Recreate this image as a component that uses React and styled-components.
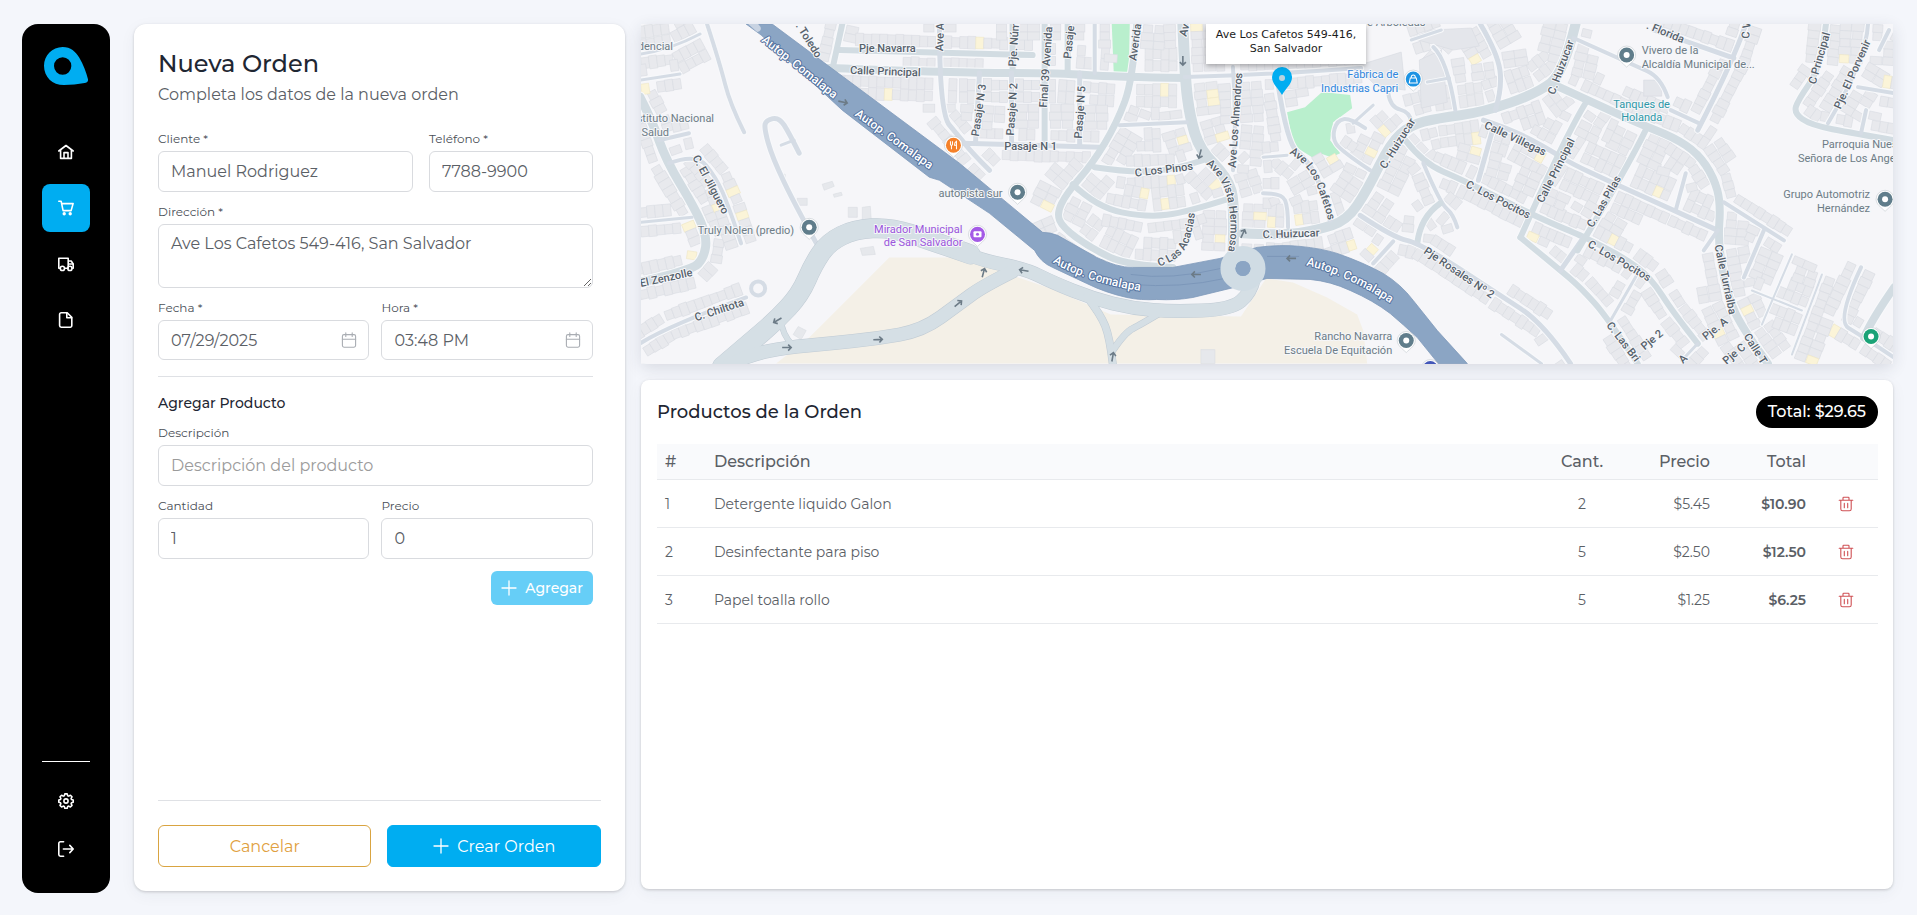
import React from "react";
import styled, { createGlobalStyle, css } from "styled-components";

const GlobalStyle = createGlobalStyle`
  *, *::before, *::after { box-sizing: border-box; }
  body {
    margin: 0;
    background: #f4f6fb;
    color: #5b6066;
    font-family: Montserrat, Inter, "Open Sans", sans-serif;
    font-size: 16px;
  }
  button, input, textarea { font: inherit; }
  h1, h2, h3, p { margin: 0; }
`;

/* ---------- shell ---------- */

const Shell = styled.div`
  display: flex;
  gap: 24px;
  min-height: 100vh;
  padding: 24px 24px 22px 22px;
`;

const Sidebar = styled.nav`
  flex: 0 0 88px;
  display: flex;
  flex-direction: column;
  align-items: center;
  padding: 23px 0 20px;
  border-radius: 16px;
  background: #000;
`;

const LogoLink = styled.a`
  display: block;
  height: 38px;
  margin-bottom: 43px;
`;

const NavGroup = styled.div`
  display: flex;
  flex-direction: column;
  gap: ${(p) => p.$gap}px;
`;

const NavLink = styled.a`
  display: flex;
  align-items: center;
  justify-content: center;
  width: 48px;
  height: 48px;
  border-radius: 8px;
  color: #fff;
  background: ${(p) => (p.$active ? "#00adf1" : "transparent")};
`;

const NavDivider = styled.hr`
  width: 48px;
  margin: auto 0 15px;
  border: 0;
  border-top: 1px solid #fff;
`;

const Main = styled.main`
  flex: 1;
  min-width: 0;
  display: grid;
  grid-template-columns: minmax(0, 20fr) minmax(0, 51fr);
  gap: 16px;
  padding-bottom: 2px;
`;

const cardShadow = css`
  box-shadow: 0 1px 3px rgba(0, 0, 0, 0.18), 0 4px 16px rgba(40, 50, 80, 0.05);
`;

/* ---------- order form ---------- */

const OrderForm = styled.form`
  display: flex;
  flex-direction: column;
  padding: 24px;
  border-radius: 12px;
  background: #fff;
  ${cardShadow}
`;

const Title = styled.h1`
  font-size: 24px;
  font-weight: 500;
  line-height: 32px;
  color: #1f2733;
`;

const Subtitle = styled.p`
  margin: 3px 0 24px;
  line-height: 24px;
`;

const FormBody = styled.div`
  flex: 1;
  display: flex;
  flex-direction: column;
  gap: 12px;
  padding-right: 8px;
`;

const FieldRow = styled.div`
  display: grid;
  grid-template-columns: ${(p) => p.$columns || "1fr 1fr"};
  gap: ${(p) => p.$gap || 12}px;
`;

const FieldBox = styled.div`
  display: flex;
  flex-direction: column;
  gap: 4px;
  min-width: 0;
`;

const Label = styled.label`
  font-size: 12px;
  line-height: 16px;
  color: #4a4f57;
`;

const inputLook = css`
  display: block;
  width: 100%;
  border: 1px solid #d9dbdf;
  border-radius: 6px;
  padding: 0 12px;
  background: #fff;
  color: #5b6066;
  outline: none;
  &::placeholder { color: #9b9b9b; opacity: 1; }
`;

const Input = styled.input`
  ${inputLook}
  height: 41px;
`;

const TextArea = styled.textarea`
  ${inputLook}
  height: 64px;
  padding: 7px 12px;
  line-height: 24px;
  resize: vertical;
`;

const IconInput = styled.div`
  position: relative;
  color: #a9adb3;
  & > input { height: 40px; }
  & > svg {
    position: absolute;
    right: 12px;
    top: 12px;
    pointer-events: none;
  }
`;

const Rule = styled.hr`
  width: 100%;
  margin: 4px 0;
  border: 0;
  border-top: 1px solid #dfe1e5;
`;

const SectionTitle = styled.h2`
  font-size: 14px;
  font-weight: 500;
  line-height: 20px;
  color: #1f2733;
`;

const buttonLook = css`
  display: inline-flex;
  align-items: center;
  justify-content: center;
  gap: 8px;
  border-radius: 6px;
  cursor: pointer;
`;

const AddButton = styled.button`
  ${buttonLook}
  align-self: flex-end;
  height: 34px;
  padding: 0 10px;
  border: 0;
  background: #66cef7;
  color: #fff;
  font-size: 14px;
  font-weight: 500;
`;

const FormFooter = styled.footer`
  display: grid;
  grid-template-columns: 1fr 1fr;
  gap: 16px;
  padding-top: 24px;
  border-top: 1px solid #dfe1e5;
`;

const FooterButton = styled.button`
  ${buttonLook}
  height: 42px;
  border: 1px solid ${(p) => (p.$primary ? "#00adf1" : "#d9a441")};
  background: ${(p) => (p.$primary ? "#00adf1" : "#fff")};
  color: ${(p) => (p.$primary ? "#fff" : "#dfa040")};
`;

/* ---------- right column ---------- */

const RightColumn = styled.div`
  display: grid;
  grid-template-rows: 2fr 3fr;
  gap: 16px;
  min-width: 0;
  padding-bottom: 2px;
`;

const MapFrame = styled.div`
  min-height: 0;
  display: grid;
  box-shadow: 0 4px 16px rgba(40, 50, 70, 0.14);
  border-radius: 0 0 6px 6px;
`;

const MapPanel = styled.section`
  position: relative;
  overflow: hidden;
  min-height: 0;
`;

const MapDrawing = styled.svg`
  position: absolute;
  inset: 0;
  width: 100%;
  height: 100%;
  font-family: Roboto, sans-serif;
`;

const MapTooltip = styled.div`
  position: absolute;
  top: 0;
  left: 645px;
  width: 160px;
  height: 40px;
  margin-left: -80px;
  padding-top: 4px;
  background: #fff;
  box-shadow: 0 2px 5px rgba(0, 0, 0, 0.3);
  color: #1c1c1c;
  font-family: "DejaVu Sans", sans-serif;
  font-size: 11px;
  line-height: 14px;
  text-align: center;
`;

const ProductsCard = styled.section`
  padding: 16px 15px 16px 16px;
  border-radius: 8px;
  background: #fff;
  ${cardShadow}
`;

const ProductsHeader = styled.header`
  display: flex;
  align-items: center;
  justify-content: space-between;
  height: 32px;
  margin-bottom: 16px;
`;

const ProductsTitle = styled.h2`
  font-size: 18px;
  font-weight: 500;
  color: #1f2733;
`;

const TotalBadge = styled.span`
  display: flex;
  align-items: center;
  height: 32px;
  padding: 0 12px;
  border-radius: 16px;
  background: #000;
  color: #fff;
  font-weight: 500;
`;

const Table = styled.table`
  width: 100%;
  table-layout: fixed;
  border-collapse: collapse;
`;

const Th = styled.th`
  width: ${(p) => p.$width || "auto"};
  height: 36px;
  padding: 0 8px;
  border-bottom: 1px solid #e8eaed;
  background: #f9fafc;
  font-weight: 500;
  text-align: ${(p) => p.$align || "left"};
`;

const Td = styled.td`
  height: 48px;
  padding: 0 8px;
  border-bottom: 1px solid #e8eaed;
  font-size: 14px;
  font-weight: ${(p) => (p.$strong ? 600 : 400)};
  text-align: ${(p) => p.$align || "left"};
`;

const DeleteButton = styled.button`
  display: inline-flex;
  padding: 4px;
  border: 0;
  background: none;
  color: #cf5054;
  cursor: pointer;
`;

/* ---------- icons ---------- */

const Icon = ({ children, size = 16, width = 1.6 }) => (
  <svg width={size} height={size} viewBox="0 0 16 16" fill="none" stroke="currentColor"
    strokeWidth={width} strokeLinecap="round" strokeLinejoin="round" aria-hidden="true">
    {children}
  </svg>
);

const HomeIcon = () => (
  <Icon>
    <path d="M.8 7 8 1.5 15.2 7M2.6 6v8.4h10.8V6" />
    <path d="M6 14.2V8.6h4v5.6" />
  </Icon>
);
const CartIcon = () => (
  <Icon>
    <path d="M.8 1.2h2.3l2 9.4h8l2-7H3.7" />
    <circle cx="6.2" cy="13.8" r=".9" fill="currentColor" />
    <circle cx="12.2" cy="13.8" r=".9" fill="currentColor" />
  </Icon>
);
const TruckIcon = () => (
  <Icon>
    <path d="M2 12.2H.8V2.2h9.4v10M10.2 5h3l2 3v4.2h-.8M6.8 12.2h2.6" />
    <path d="M10.8 8h4" />
    <circle cx="4.4" cy="12.4" r="2.1" />
    <circle cx="11.9" cy="12.4" r="2.1" />
  </Icon>
);
const FileIcon = () => (
  <Icon>
    <path d="M3.2.8h6l4.6 4.6v8.2a1.6 1.6 0 0 1-1.6 1.6h-9a1.6 1.6 0 0 1-1.6-1.6V2.4A1.6 1.6 0 0 1 3.2.8Z" />
    <path d="M8.8 1v4.8h4.8" />
  </Icon>
);
const CogIcon = () => (
  <Icon>
    <path d="M6.8.9h2.4l.5 1.8 1 .4 1.7-.9 1.6 1.6-.9 1.7.4 1 1.7.5v2.2l-1.7.5-.4 1 .9 1.7-1.6 1.6-1.7-.9-1 .4-.5 1.7H6.8l-.5-1.7-1-.4-1.7.9L2 12.4l.9-1.7-.4-1L.8 9.2V7l1.7-.5.4-1L2 3.8l1.6-1.6 1.7.9 1-.4Z" />
    <circle cx="8" cy="8" r="2.1" />
  </Icon>
);
const LogoutIcon = () => (
  <Icon>
    <path d="M5.6.8H2.4A1.6 1.6 0 0 0 .8 2.4v11.2a1.6 1.6 0 0 0 1.6 1.6h3.2M5.4 8h9.8M11.8 4.4 15.2 8l-3.4 3.6" />
  </Icon>
);
const PlusIcon = () => (
  <Icon width={1.3}>
    <path d="M8 1v14M1 8h14" />
  </Icon>
);
const CalendarIcon = () => (
  <Icon width={1.1}>
    <rect x="1.4" y="2.6" width="13.2" height="12.6" rx="1.6" />
    <path d="M1.4 7.3h13.2M4.8.8v3.6M11.2.8v3.6" />
  </Icon>
);
const TrashIcon = () => (
  <Icon width={1.1}>
    <path d="M1.2 4.2h13.6M2.8 4.2V13a1.8 1.8 0 0 0 1.8 1.8h6.8a1.8 1.8 0 0 0 1.8-1.8V4.2M5 4.2V1.9q0-.7.7-.7h4.6q.7 0 .7.7v2.3M6.3 7.4v4.4M9.7 7.4v4.4" />
  </Icon>
);
const Logo = () => (
  <svg width="44" height="38" viewBox="0 0 132 114" aria-hidden="true">
    <path fill="#00adf1" fillRule="evenodd"
      d="M56 0C80 0 95 14 106 32C118 53 127 75 132 97C133 104 128 107 122 108C102 112 80 114 60 114C25 114 0 90 0 56C0 25 25 0 56 0ZM56 31A26 26 0 1 0 56 83A26 26 0 1 0 56 31Z" />
  </svg>
);

/* ---------- map data ---------- */

// width, points, rows of houses on each side
const STREETS = [
  [4, [[67, 0], [80, 40], [90, 80], [104, 108]], 0],
  [9, [[0, 73], [12, 96], [26, 136], [56, 186], [67, 213], [64, 233], [52, 246], [0, 258]], 1],
  [4, [[19, 116], [49, 109]], 1],
  [4, [[29, 139], [56, 129], [76, 153], [89, 183], [101, 219]], 1],
  [3, [[0, 198], [52, 193]], 1],
  [3, [[0, 30], [30, 26], [60, 10]], 2],
  [3, [[0, 56], [40, 50]], 1],
  [4, [[0, 319], [29, 301], [106, 273]], 1],
  [5, [[179, 224], [156, 183], [132, 133], [124, 104], [126, 96], [139, 93], [149, 109], [159, 129]], 0],
  [3, [[141, 121], [154, 116]], 0],
  [6, [[202, 0], [193, 41]], 1],
  [6, [[199, 26], [376, 31], [392, 31]], 1],
  [8, [[189, 44], [319, 49], [419, 49], [472, 53], [546, 54]], 2],
  [5, [[299, 0], [299, 89], [319, 113], [332, 129], [349, 146]], 1],
  [5, [[322, 119], [459, 123]], 1],
  [6, [[372, 0], [372, 49]], 1],
  [6, [[404, 0], [404, 119]], 2],
  [6, [[427, 0], [427, 49]], 1],
  [4, [[454, 0], [454, 49]], 1],
  [5, [[439, 49], [439, 121]], 2],
  [5, [[339, 49], [335, 119]], 2],
  [5, [[371, 49], [371, 121]], 2],
  [7, [[496, 0], [492, 56], [476, 99], [452, 139], [426, 169], [416, 189], [422, 203], [449, 223], [486, 241], [532, 243]], 2],
  [11, [[542, 0], [544, 53], [549, 93], [559, 126], [586, 153], [594, 179], [592, 230]], 2],
  [4, [[479, 101], [546, 98]], 2],
  [6, [[454, 143], [486, 148], [532, 146], [562, 136]], 1],
  [6, [[432, 160], [456, 183], [506, 193], [546, 188], [592, 173]], 2],
  [4, [[592, 43], [596, 100], [592, 146]], 2],
  [4, [[544, 53], [640, 50], [720, 44]], 1],
  [10, [[602, 209], [640, 211], [676, 206], [706, 196], [726, 166], [749, 119], [769, 101], [796, 94], [842, 88], [896, 69], [922, 49], [934, 0]], 2],
  [5, [[637, 60], [646, 119], [666, 136], [680, 160], [689, 196]], 2],
  [3, [[622, 133], [646, 131]], 1],
  [4, [[622, 169], [641, 169], [647, 183], [647, 203]], 1],
  [4, [[729, 146], [699, 126], [691, 113], [696, 96], [709, 94], [724, 104]], 1],
  [3, [[712, 99], [732, 81]], 0],
  [4, [[747, 69], [749, 83], [769, 88], [770, 98]], 0],
  [5, [[839, 0], [856, 29], [861, 63], [854, 86]], 2],
  [4, [[792, 23], [806, 36], [814, 86]], 1],
  [3, [[786, 58], [808, 54]], 0],
  [3, [[770, 16], [800, 6]], 1],
  [5, [[842, 96], [872, 106], [909, 126], [929, 139], [972, 159], [1032, 186], [1076, 206]], 2],
  [6, [[764, 116], [782, 139], [822, 156], [896, 193], [939, 211], [949, 216], [982, 233], [1009, 253], [1032, 289], [1056, 319]], 1],
  [5, [[852, 103], [837, 156]], 2],
  [4, [[782, 139], [799, 179], [812, 190], [816, 203]], 1],
  [6, [[799, 179], [779, 193], [776, 219]], 1],
  [5, [[719, 191], [752, 213], [779, 219], [856, 269], [902, 299], [929, 339]], 1],
  [4, [[752, 217], [732, 239]], 1],
  [6, [[946, 76], [939, 86], [909, 146], [879, 213]], 2],
  [6, [[879, 213], [919, 246], [939, 263], [966, 293], [996, 339]], 1],
  [5, [[942, 213], [919, 246]], 1],
  [3, [[996, 249], [969, 296]], 1],
  [6, [[1004, 106], [986, 143], [936, 226]], 2],
  [8, [[909, 59], [929, 68], [996, 99], [1032, 113], [1056, 129], [1072, 153], [1079, 179], [1076, 219], [1086, 273], [1102, 306], [1126, 339]], 2],
  [4, [[1082, 178], [1142, 216]], 1],
  [4, [[1122, 206], [1102, 253]], 2],
  [4, [[1044, 149], [1034, 186]], 2],
  [4, [[1076, 206], [1062, 226]], 1],
  [4, [[932, 14], [992, 41], [1019, 53], [1026, 73]], 0],
  [5, [[1012, 6], [1092, 34]], 1],
  [5, [[1104, 0], [1092, 36], [1056, 106]], 1],
  [4, [[1029, 86], [1057, 99]], 1],
  [6, [[1184, 0], [1179, 43], [1156, 76], [1152, 89], [1169, 101], [1212, 109], [1252, 116]], 1],
  [4, [[1226, 0], [1224, 36], [1186, 99]], 2],
  [4, [[1216, 63], [1252, 69]], 1],
  [4, [[1224, 86], [1219, 109]], 1],
  [4, [[1247, 6], [1237, 26]], 1],
  [4, [[1219, 243], [1194, 296], [1219, 311], [1252, 333]], 1],
  [8, [[1252, 263], [1229, 296], [1222, 313]], 0],
  [2, [[1110, 266], [1160, 286]], 2],
  [2, [[1180, 250], [1150, 330]], 2],
  [2, [[1150, 230], [1120, 300]], 2],
  [3, [[1040, 336], [1056, 319]], 1],
  [3, [[860, 310], [900, 339]], 0],
];

// areas left without houses
const OPEN_LAND = [
  [[70, 0], [108, 0], [200, 86], [290, 156], [400, 228], [300, 200], [200, 200], [160, 250], [130, 215], [112, 120]],
  [[230, 200], [400, 226], [450, 262], [600, 276], [660, 246], [740, 280], [810, 339], [90, 339], [160, 270]],
  [[1120, 12], [1165, 14], [1144, 86], [1170, 112], [1252, 124], [1252, 230], [1200, 230], [1100, 168], [1084, 120]],
  [[816, 190], [860, 190], [940, 262], [970, 300], [955, 339], [935, 330], [900, 280], [840, 250], [800, 218]],
  [[860, 300], [910, 320], [920, 339], [840, 339], [800, 300], [790, 260]],
  [[646, 88], [681, 62], [715, 68], [699, 132], [652, 125]],
  [[470, 0], [492, 0], [490, 50], [472, 50]],
  [[950, 6], [1010, 14], [1080, 40], [1030, 80], [960, 60]],
  [[1000, 190], [1060, 215], [1060, 260], [1030, 270]],
];

const PARKS = [
  "M471 0H489L488 49H473Z",
  "M646 88L664 83L681 68L709 71L711 84L692 98L689 116L699 129L690 133L679 129L671 133L652 121Z",
];

const SAND = [
  "M249 233H319L410 264L470 290L600 292L625 254L652 258L686 273L716 290L722 306L726 339H136L169 313Z",
];

const HIGHWAY =
  "M106 0H132L319 139L402 208Q410 208 417 211L456 233Q476 243 492 243H532L579 234L616 223Q640 220 659 222Q680 224 696 229Q722 238 742 249Q760 260 772 276L796 306L826 339H797L776 313Q762 300 749 289Q732 276 709 266Q690 257 669 255L626 254L589 264L552 273Q535 276 516 275Q500 276 486 273Q464 268 446 259L412 243Q400 238 394 226L349 189L299 156L289 153L202 86L121 11Z";

const RAMPS = [
  [19, [[82, 342], [110, 318], [136, 296], [160, 270], [173, 240], [188, 218], [214, 205], [250, 203], [290, 216], [330, 230]]],
  [13, [[290, 218], [319, 226], [342, 236], [386, 245], [412, 258], [452, 274], [492, 284], [532, 287], [590, 285], [610, 268], [613, 254]]],
  [13, [[89, 340], [110, 330], [146, 323], [190, 319], [236, 314], [282, 306], [319, 279], [342, 262], [372, 247]]],
  [7, [[446, 272], [460, 290], [469, 313], [472, 339]]],
  [6, [[520, 288], [500, 300], [484, 308], [472, 326]]],
  [5, [[141, 296], [142, 310], [152, 320]]],
];

const smooth = (pts) => {
  if (pts.length < 3) return `M${pts.map((p) => p.join(" ")).join("L")}`;
  let d = `M${pts[0].join(" ")}`;
  for (let i = 1; i < pts.length - 1; i++) {
    const [x, y] = pts[i];
    const last = i === pts.length - 2;
    const ex = last ? pts[i + 1][0] : (x + pts[i + 1][0]) / 2;
    const ey = last ? pts[i + 1][1] : (y + pts[i + 1][1]) / 2;
    d += `Q${x} ${y} ${ex} ${ey}`;
  }
  return d;
};

const inside = (x, y, poly) => {
  let hit = false;
  for (let i = 0, j = poly.length - 1; i < poly.length; j = i++) {
    const [xi, yi] = poly[i];
    const [xj, yj] = poly[j];
    if (yi > y !== yj > y && x < ((xj - xi) * (y - yi)) / (yj - yi) + xi) hit = !hit;
  }
  return hit;
};

// distance from a point to a street's centre line
const distance = (x, y, pts) => {
  let best = 1e9;
  for (let i = 1; i < pts.length; i++) {
    const [ax, ay] = pts[i - 1];
    const dx = pts[i][0] - ax;
    const dy = pts[i][1] - ay;
    const t = Math.max(0, Math.min(1, ((x - ax) * dx + (y - ay) * dy) / (dx * dx + dy * dy)));
    best = Math.min(best, Math.hypot(x - ax - t * dx, y - ay - t * dy));
  }
  return best;
};

const HOUSES = (() => {
  let seed = 11;
  const rnd = () => (seed = (seed * 16807) % 2147483647) / 2147483647;
  const out = [];
  STREETS.forEach(([w, pts, rows]) => {
    for (let i = 1; i < pts.length && rows; i++) {
      const [ax, ay] = pts[i - 1];
      const dx = pts[i][0] - ax;
      const dy = pts[i][1] - ay;
      const len = Math.hypot(dx, dy);
      const nx = -dy / len;
      const ny = dx / len;
      for (let s = 4; s < len; s += 8) {
        for (let row = 0; row < rows; row++) {
          for (const side of [-1, 1]) {
            const depth = 9 + rnd() * 4;
            const off = side * (w / 2 + 8 + row * 12);
            const x = ax + (dx * s) / len + nx * off;
            const y = ay + (dy * s) / len + ny * off;
            const tint = rnd();
            if (x < -4 || x > 1256 || y < -4 || y > 343) continue;
            if (OPEN_LAND.some((poly) => inside(x, y, poly))) continue;
            if (STREETS.some(([sw, sp]) => distance(x, y, sp) < sw / 2 + 4)) continue;
            if (out.some((h) => Math.hypot(h.x - x, h.y - y) < 7.5)) continue;
            out.push({ x, y, depth, tint, angle: (Math.atan2(dy, dx) * 180) / Math.PI });
          }
        }
      }
    }
  });
  return out;
})();

// text, x, y, angle
const STREET_NAMES = [
  ["C. El Jilguero", 71, 160, 62],
  ["El Zenzolle", 26, 253, -12],
  ["C. Chiltota", 79, 285, -18],
  [". Toledo", 169, 16, 58],
  ["Ave A", 299, 13, -88],
  ["Pje Navarra", 247, 24, 0],
  ["Calle Principal", 245, 47, 2],
  ["Pje. Núm", 373, 20, -86],
  ["Final 39 Avenida", 405, 43, -86],
  ["Pasaje", 428, 18, -84],
  ["Averida", 494, 18, -82],
  ["Av", 543, 6, -75],
  ["Pasaje N 3", 338, 86, -82],
  ["Pasaje N 2", 371, 85, -86],
  ["Pasaje N 5", 439, 88, -86],
  ["Pasaje N 1", 390, 122, 0],
  ["C Los Pinos", 523, 145, -7],
  ["Ave Los Almendros", 594, 96, -86],
  ["C. Huizucar", 650, 209, -2],
  ["C. Huizucar", 756, 119, -58],
  ["C. Huizucar", 919, 43, -70],
  ["Calle Villegas", 874, 114, 25],
  ["C. Los Pocitos", 857, 175, 27],
  ["Calle Principal", 914, 146, -63],
  ["Pje Rosales Nº 2", 818, 248, 34],
  [". Florida", 1024, 8, 22],
  ["C V", 1104, 6, -84],
  ["C Principal", 1177, 34, -74],
  ["Pje. El Porvenir", 1210, 50, -66],
  ["C. Las Pilas", 962, 177, -60],
  ["C. Los Pocitos", 978, 236, 30],
  ["Calle Turrialba", 1084, 255, 78],
  ["Calle T", 1114, 324, 58],
  ["C. Las Bri", 982, 317, 52],
  ["Pje 2", 1010, 315, -40],
  ["Pje. A", 1073, 304, -38],
  ["Pje C", 1092, 329, -40],
  ["A", 1041, 334, -45],
];

const CURVED_NAMES = [
  ["vista", "M565 140Q584 154 588 182T586 230", "Ave Vista Hermosa"],
  ["acacias", "M518 242Q543 235 549 214T554 182", "C Las Acacias"],
  ["cafetos", "M648 129Q668 140 676 162T689 202", "Ave Los Cafetos"],
];

const HIGHWAY_NAMES = [
  ["autop1", "M121 17L207 86"],
  ["autop2", "M214 91L304 156"],
  ["autop3", "M412 238Q452 262 520 269"],
  ["autop4", "M665 241Q712 252 766 290"],
];

// colour, anchor, x, [line, baseline]...
const PLACES = [
  ["#6d7c86", "end", 33, ["dencial", 26]],
  ["#6d7c86", "end", 74, ["stituto Nacional", 98]],
  ["#6d7c86", "end", 29, ["Salud", 112]],
  ["#6d7c86", "end", 154, ["Truly Nolen (predio)", 210]],
  ["#6d7c86", "end", 362, ["autopista sur", 173]],
  ["#9a55dc", "end", 322, ["Mirador Municipal", 209], ["de San Salvador", 222]],
  ["#2f86dd", "end", 757, ["Fábrica de", 54], ["Industrias Capri", 68]],
  ["#6d7c86", "end", 751, ["Rancho Navarra", 315], ["Escuela De Equitación", 329]],
  ["#6d7c86", "start", 1000, ["Vivero de la", 30], ["Alcaldía Municipal de...", 44]],
  ["#2d98a8", "middle", 1000, ["Tanques de", 84], ["Holanda", 97]],
  ["#6d7c86", "start", 1180, ["Parroquia Nuestra", 124]],
  ["#6d7c86", "start", 1156, ["Señora de Los Angeles", 138]],
  ["#6d7c86", "end", 1228, ["Grupo Automotriz", 174], ["Hernández", 188]],
  ["#6d7c86", "middle", 755, ["e Arboledas", 2]],
];

const PINS = [
  [169, 203, "#607d8b"],
  [377, 168, "#607d8b"],
  [765, 316, "#607d8b"],
  [985, 31, "#607d8b"],
  [1243, 175, "#607d8b"],
  [1229, 312, "#1aa377"],
  [789, 344, "#4256b8"],
  [313, 121, "#f5812a", "food"],
  [337, 210, "#a45be6", "camera"],
  [772, 55, "#1c93e3", "bag"],
];

const ARROWS = [
  [203, 78, 12], [137, 296, 150], [147, 323, 0], [238, 315, -2], [318, 279, -40], [343, 248, -75],
  [383, 246, 190], [472, 332, -80], [542, 37, 90], [559, 130, 105], [602, 209, -65], [555, 250, 180], [650, 234, 180],
];

const glyphs = {
  food: <path d="M-3-4v3q0 1 1 1v4M-1-4v3q0 1-1 1M3 4v-8q-2 1-2 4h2" stroke="#fff" fill="none" />,
  camera: (
    <>
      <rect x="-4" y="-3" width="8" height="6" rx="1" fill="#fff" />
      <circle r="1.5" fill="#a45be6" />
    </>
  ),
  bag: <path d="M-3-1H3L4 4H-4ZM-2-1V-2Q-2-4 0-4T2-2V-1" stroke="#fff" fill="none" />,
};

const Pin = ({ x, y, color, glyph }) => (
  <g transform={`translate(${x} ${y})`}>
    <path d="M-9 0A9 9 0 1 1 9 0C9 5 4 8 0 12C-4 8-9 5-9 0Z" fill="#fff" stroke="#c3c9cf" strokeWidth=".6" />
    <circle r="7.5" fill={color} />
    {glyph ? glyphs[glyph] : <circle r="3" fill="#fff" />}
  </g>
);

const halo = { stroke: "#f5f6f9", strokeWidth: 2, paintOrder: "stroke", strokeLinejoin: "round" };
const blueHalo = { ...halo, stroke: "#5573a0" };

const CityMap = () => (
  <MapDrawing viewBox="0 0 1252 339" preserveAspectRatio="xMidYMid slice" role="img" aria-label="Mapa">
    <rect width="1252" height="339" fill="#f6f6f9" />
    {SAND.map((d) => <path key={d} d={d} fill="#f4f0e7" />)}
    {PARKS.map((d) => <path key={d} d={d} fill="#b9efcd" />)}
    <g strokeWidth=".6">
      {HOUSES.map((h, i) => (
        <rect key={i} x="-4" y={-h.depth / 2} width="8" height={h.depth}
          fill={h.tint > 0.965 ? "#fbf4d8" : "#e8e9ed"} stroke={h.tint > 0.965 ? "#efe7c6" : "#dadde3"}
          transform={`translate(${h.x} ${h.y}) rotate(${h.angle})`} />
      ))}
      <path d="M715 42L760 28L764 66L735 62Z M778 36L800 26L806 78L780 84Z M770 14L790 6L830 4L838 22L812 26Z M1002 56H1020V72H1002Z" fill="#e4e6eb" stroke="#d6dae0" />
      <path d="M157 174h10v7h-10zM182 160l10-3 2 5-10 4zM208 183h9v10h-9zM222 183l8-1 1 15-9 1zM141 150h4v8h-4zM193 170l8-2 1 3-8 2zM220 224l13-2 2 8-13 1zM158 302l8 4-5 9-8-5zM560 325h14v14h-14z" fill="#e6e8ec" stroke="#dadde3" />
    </g>
    <g fill="none" strokeLinecap="round" strokeLinejoin="round">
      {STREETS.map(([w, pts], i) => <path key={i} d={smooth(pts)} stroke="#f8f9fb" strokeWidth={w + 2} />)}
      {STREETS.map(([w, pts], i) => <path key={i} d={smooth(pts)} stroke={w > 5 ? "#d2dce2" : "#d5dce5"} strokeWidth={w} />)}
      <circle cx="118" cy="264" r="7" stroke="#d5dce5" strokeWidth="4" fill="#f6f6f9" />
      {RAMPS.map(([w, pts], i) => <path key={i} d={smooth(pts)} stroke="#c0cbd4" strokeWidth={w + 1} />)}
      {RAMPS.map(([w, pts], i) => <path key={i} d={smooth(pts)} stroke="#d5dfe5" strokeWidth={w} />)}
    </g>
    <path d={HIGHWAY} fill="#8ba5c4" stroke="#7f9aba" strokeWidth=".8" />
    <path d="M108 0H118Q124 6 117 8Z" fill="#c8d3e2" />
    <path d="M490 250Q530 256 580 244M490 260Q540 264 584 254M626 232H658" fill="none" stroke="#7690b4" strokeWidth=".7" />
    <circle cx="602" cy="244" r="15" fill="none" stroke="#d0dce4" strokeWidth="15" />
    <circle cx="602" cy="244" r="7.5" fill="#8ba5c4" />

    <g stroke="#6c7b87" strokeWidth="1.6" fill="none">
      {ARROWS.map(([x, y, a]) => (
        <path key={`${x}-${y}`} d="M-5 0H4M1-3L4 0L1 3" transform={`translate(${x} ${y}) rotate(${a})`} />
      ))}
    </g>

    <g fill="#56616b" fontSize="11" fontWeight="500" textAnchor="middle">
      {STREET_NAMES.map(([t, x, y, a]) => (
        <text key={`${t}${x}`} transform={`translate(${x} ${y}) rotate(${a})`} dy="4" {...halo}>{t}</text>
      ))}
    </g>
    <g fill="#56616b" fontSize="11" fontWeight="500">
      {CURVED_NAMES.map(([id, d, t]) => (
        <React.Fragment key={id}>
          <path id={id} d={d} fill="none" />
          <text {...halo}><textPath href={`#${id}`}>{t}</textPath></text>
        </React.Fragment>
      ))}
    </g>
    <g fill="#fff" fontSize="12" fontWeight="500">
      {HIGHWAY_NAMES.map(([id, d]) => (
        <React.Fragment key={id}>
          <path id={id} d={d} fill="none" />
          <text {...blueHalo}><textPath href={`#${id}`}>Autop. Comalapa</textPath></text>
        </React.Fragment>
      ))}
    </g>
    <g fontSize="11">
      {PLACES.map(([color, anchor, x, ...lines]) =>
        lines.map(([t, y]) => (
          <text key={t} x={x} y={y} fill={color} textAnchor={anchor} {...halo}>{t}</text>
        ))
      )}
    </g>
    {PINS.map(([x, y, color, glyph]) => <Pin key={`${x}-${y}`} x={x} y={y} color={color} glyph={glyph} />)}

    <path d="M641 71C637 64 631 60 631 53A10 10 0 0 1 651 53C651 60 645 64 641 71Z" fill="#00adf1" />
    <circle cx="641" cy="54" r="3" fill="#b9d3df" />
  </MapDrawing>
);

/* ---------- page ---------- */

const Field = ({ id, label, as: Control = Input, icon, ...rest }) => (
  <FieldBox>
    <Label htmlFor={id}>{label}</Label>
    {icon ? (
      <IconInput>
        <Control id={id} {...rest} />
        {icon}
      </IconInput>
    ) : (
      <Control id={id} {...rest} />
    )}
  </FieldBox>
);

const products = [
  { n: 1, name: "Detergente liquido Galon", qty: 2, price: "$5.45", total: "$10.90" },
  { n: 2, name: "Desinfectante para piso", qty: 5, price: "$2.50", total: "$12.50" },
  { n: 3, name: "Papel toalla rollo", qty: 5, price: "$1.25", total: "$6.25" },
];

export default function App() {
  return (
    <>
      <GlobalStyle />
      <Shell>
        <Sidebar aria-label="Principal">
          <LogoLink href="#" aria-label="Inicio"><Logo /></LogoLink>
          <NavGroup $gap={8}>
            <NavLink href="#inicio" aria-label="Inicio"><HomeIcon /></NavLink>
            <NavLink href="#ordenes" aria-label="Órdenes" $active><CartIcon /></NavLink>
            <NavLink href="#envios" aria-label="Envíos"><TruckIcon /></NavLink>
            <NavLink href="#reportes" aria-label="Reportes"><FileIcon /></NavLink>
          </NavGroup>
          <NavDivider />
          <NavGroup $gap={0}>
            <NavLink href="#ajustes" aria-label="Ajustes"><CogIcon /></NavLink>
            <NavLink href="#salir" aria-label="Salir"><LogoutIcon /></NavLink>
          </NavGroup>
        </Sidebar>

        <Main>
          <OrderForm onSubmit={(e) => e.preventDefault()}>
            <Title>Nueva Orden</Title>
            <Subtitle>Completa los datos de la nueva orden</Subtitle>
            <FormBody>
              <FieldRow $columns="14fr 9fr" $gap={16}>
                <Field id="cliente" label="Cliente *" defaultValue="Manuel Rodriguez" />
                <Field id="telefono" label="Teléfono *" defaultValue="7788-9900" />
              </FieldRow>
              <Field id="direccion" label="Dirección *" as={TextArea}
                defaultValue="Ave Los Cafetos 549-416, San Salvador" />
              <FieldRow>
                <Field id="fecha" label="Fecha *" defaultValue="07/29/2025" icon={<CalendarIcon />} />
                <Field id="hora" label="Hora *" defaultValue="03:48 PM" icon={<CalendarIcon />} />
              </FieldRow>
              <Rule />
              <SectionTitle>Agregar Producto</SectionTitle>
              <Field id="descripcion" label="Descripción" placeholder="Descripción del producto" />
              <FieldRow>
                <Field id="cantidad" label="Cantidad" defaultValue="1" />
                <Field id="precio" label="Precio" defaultValue="0" />
              </FieldRow>
              <AddButton type="button"><PlusIcon />Agregar</AddButton>
            </FormBody>
            <FormFooter>
              <FooterButton type="button">Cancelar</FooterButton>
              <FooterButton type="submit" $primary><PlusIcon />Crear Orden</FooterButton>
            </FormFooter>
          </OrderForm>

          <RightColumn>
            <MapFrame>
              <MapPanel>
                <CityMap />
                <MapTooltip>Ave Los Cafetos 549-416,<br />San Salvador</MapTooltip>
              </MapPanel>
            </MapFrame>

            <ProductsCard>
              <ProductsHeader>
                <ProductsTitle>Productos de la Orden</ProductsTitle>
                <TotalBadge>Total: $29.65</TotalBadge>
              </ProductsHeader>
              <Table>
                <thead>
                  <tr>
                    <Th $width="49px">#</Th>
                    <Th>Descripción</Th>
                    <Th $width="80px" $align="center">Cant.</Th>
                    <Th $width="96px" $align="right">Precio</Th>
                    <Th $width="96px" $align="right">Total</Th>
                    <Th $width="64px" aria-label="Acciones" />
                  </tr>
                </thead>
                <tbody>
                  {products.map((p) => (
                    <tr key={p.n}>
                      <Td>{p.n}</Td>
                      <Td>{p.name}</Td>
                      <Td $align="center">{p.qty}</Td>
                      <Td $align="right">{p.price}</Td>
                      <Td $align="right" $strong>{p.total}</Td>
                      <Td $align="center">
                        <DeleteButton type="button" aria-label={`Eliminar ${p.name}`}><TrashIcon /></DeleteButton>
                      </Td>
                    </tr>
                  ))}
                </tbody>
              </Table>
            </ProductsCard>
          </RightColumn>
        </Main>
      </Shell>
    </>
  );
}
